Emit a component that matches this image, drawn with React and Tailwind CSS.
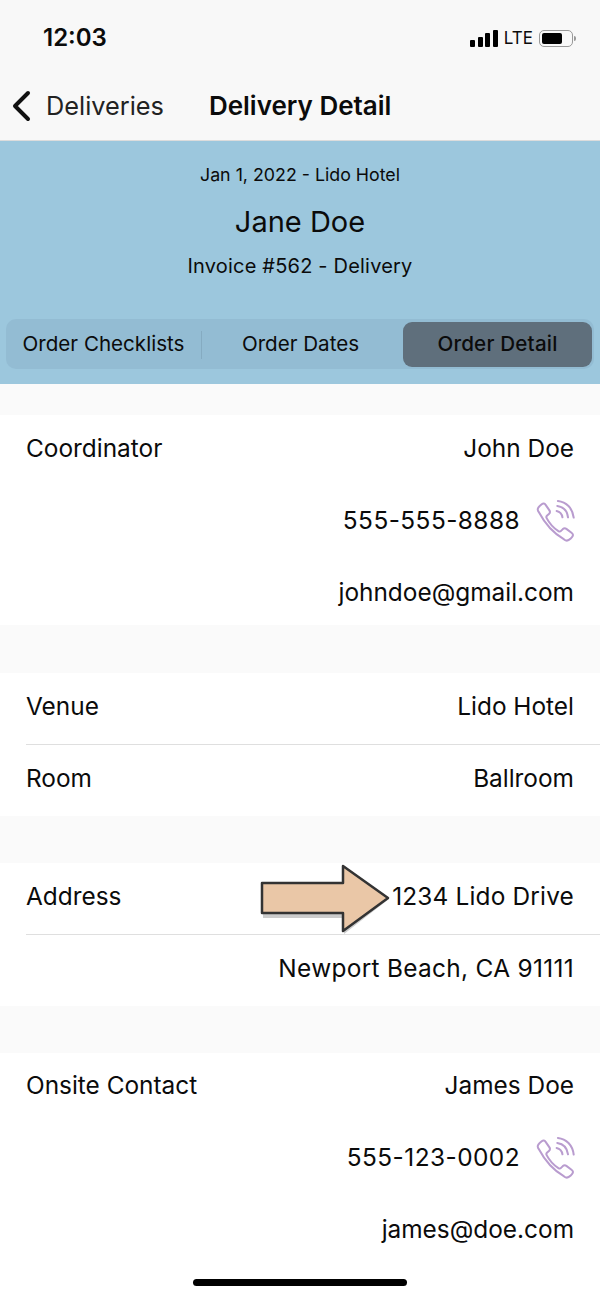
import React from 'react';

const PhoneIcon = () => (
  <svg width="40" height="43" viewBox="3 0 31 34" fill="none" stroke="#b99ccf" strokeWidth="1.6" strokeLinecap="round" strokeLinejoin="round">
    <path d="M5 10.5c-1.6-1.8-1-3.6.6-5l1.6-1.3c1.2-.9 2.3-.7 3.1.4l3 4.4c.7 1.1.5 2-.4 2.8l-1.4 1.2c-.7.6-.8 1.3-.4 2.1 2.3 4.4 5.2 7.6 9.3 10.3.8.5 1.5.4 2.1-.2l1.4-1.4c.9-.8 1.8-.9 2.8-.2l4.3 3.3c1.1.8 1.2 2 .3 3l-1.4 1.6c-1.5 1.5-3.2 2-5 .5C15.5 26.500 10 20 5 10.500z" />
    <path d="M19 9.500c2.600.6 4.200 2.400 4.600 5" />
    <path d="M19.500 5.500c4.700.7 7.900 4 8.500 9" />
    <path d="M20 1.500c6.600.8 11.600 5.600 12.500 13.200" />
  </svg>
);

const Row = ({ label, value, phone, valueClass = '' }) => (
  <div className="flex h-[36px] items-center justify-between px-[26px]">
    <span>{label}</span>
    <div className="flex items-center">
      <span className={valueClass}>{value}</span>
      {phone && (
        <span className="-mr-[2px] ml-[16px] flex">
          <PhoneIcon />
        </span>
      )}
    </div>
  </div>
);

const Divider = () => <div className="mb-[15px] ml-[26px] mt-[20px] h-px bg-[#dfdfdf]" />;

const App = () => (
  <div className="flex h-[1299px] w-[600px] flex-col overflow-hidden bg-[#fafafa] font-['Inter','Noto_Sans',sans-serif] text-[24.4px] leading-[36px] text-[#0b0b0b]">
    <header className="h-[141px] border-b border-[#dcdcdc] bg-[#f8f8f8]">
      <div className="flex h-[76px] items-center justify-between pl-[43px] pr-[24px]">
        <span className="text-[24px] font-semibold">12:03</span>
        <div className="flex items-center gap-[6px]">
          <div className="flex items-end gap-[2.5px]">
            <span className="h-[7px] w-[5px] rounded-[1px] bg-black" />
            <span className="h-[10px] w-[5px] rounded-[1px] bg-black" />
            <span className="h-[14px] w-[5px] rounded-[1px] bg-black" />
            <span className="h-[17px] w-[5px] rounded-[1px] bg-black" />
          </div>
          <span className="text-[17px] leading-none">LTE</span>
          <div className="flex items-center">
            <div className="flex h-[17px] w-[34px] items-center rounded-[5px] border border-[#999] p-[2px]">
              <span className="h-[11px] w-[20px] rounded-[2px] bg-black" />
            </div>
            <span className="ml-px h-[5px] w-[2px] rounded-r-full bg-[#999]" />
          </div>
        </div>
      </div>
      <div className="flex h-[60px] items-center pl-[11px]">
        <svg width="24" height="36" viewBox="0 0 24 36" fill="none" stroke="#111" strokeWidth="4" strokeLinecap="round" strokeLinejoin="round">
          <path d="M17 5L4 18L17 31" />
        </svg>
        <span className="ml-[11px] text-[25.3px] text-[#222]">Deliveries</span>
        <span className="ml-[45px] text-[26px] font-semibold">Delivery Detail</span>
      </div>
    </header>

    <section className="h-[243px] bg-[#9cc7dd] px-[6px] pt-[17px] text-center">
      <p className="text-[17.8px] leading-[34px]">Jan 1, 2022 - Lido Hotel</p>
      <p className="mt-[10px] text-[29px] leading-[40px]">Jane Doe</p>
      <p className="mt-[9px] text-[20px] leading-[30px] tracking-[0.2px]">Invoice #562 - Delivery</p>
      <div className="mt-[38px] flex h-[50px] items-center rounded-[10px] bg-[#93bcd3] pt-px text-[20.6px] leading-none">
        <div className="flex h-[28px] w-[196px] items-center justify-center border-r border-[#85abc1]">Order Checklists</div>
        <div className="mr-[4px] w-[197px] text-center">Order Dates</div>
        <div className="flex h-[45px] w-[189px] items-center justify-center rounded-[9px] bg-[#5f6f7c] font-medium tracking-[0.2px]">Order Detail</div>
      </div>
    </section>

    <div className="mt-[31px] flex flex-col gap-[36px] bg-white py-[15px]">
      <Row label="Coordinator" value="John Doe" />
      <Row value="555-555-8888" phone valueClass="tracking-[0.45px]" />
      <Row value="johndoe@gmail.com" />
    </div>

    <div className="mt-[48px] bg-white pb-[20px] pt-[15px]">
      <Row label="Venue" value="Lido Hotel" />
      <Divider />
      <Row label="Room" value="Ballroom" />
    </div>

    <div className="relative mt-[47px] bg-white pb-[20px] pt-[15px]">
      <Row label="Address" value="1234 Lido Drive" valueClass="tracking-[0.18px]" />
      {/* callout arrow sitting on top of the address row */}
      <svg className="absolute left-[258px] top-0" width="136" height="74" viewBox="0 0 136 74" fill="none">
        <path d="M4 22H85V3L130 35L85 70V54H4Z" fill="#000" fillOpacity="0.2" transform="translate(1 1)" />
        <path d="M4 20H85V3L130 35L85 68V50H4Z" fill="#eac7a7" stroke="#333" strokeWidth="2.5" strokeLinejoin="round" />
      </svg>
      <Divider />
      <Row value="Newport Beach, CA 91111" valueClass="tracking-[0.32px]" />
    </div>

    <div className="mt-[47px] flex flex-1 flex-col bg-white pt-[14px]">
      <div className="flex flex-col gap-[36px]">
        <Row label="Onsite Contact" value="James Doe" />
        <Row value="555-123-0002" phone valueClass="tracking-[0.45px]" />
        <Row value="james@doe.com" />
      </div>
      <div className="mx-auto mb-[13px] mt-auto h-[7px] w-[214px] rounded-full bg-black" />
    </div>
  </div>
);

export default App;
